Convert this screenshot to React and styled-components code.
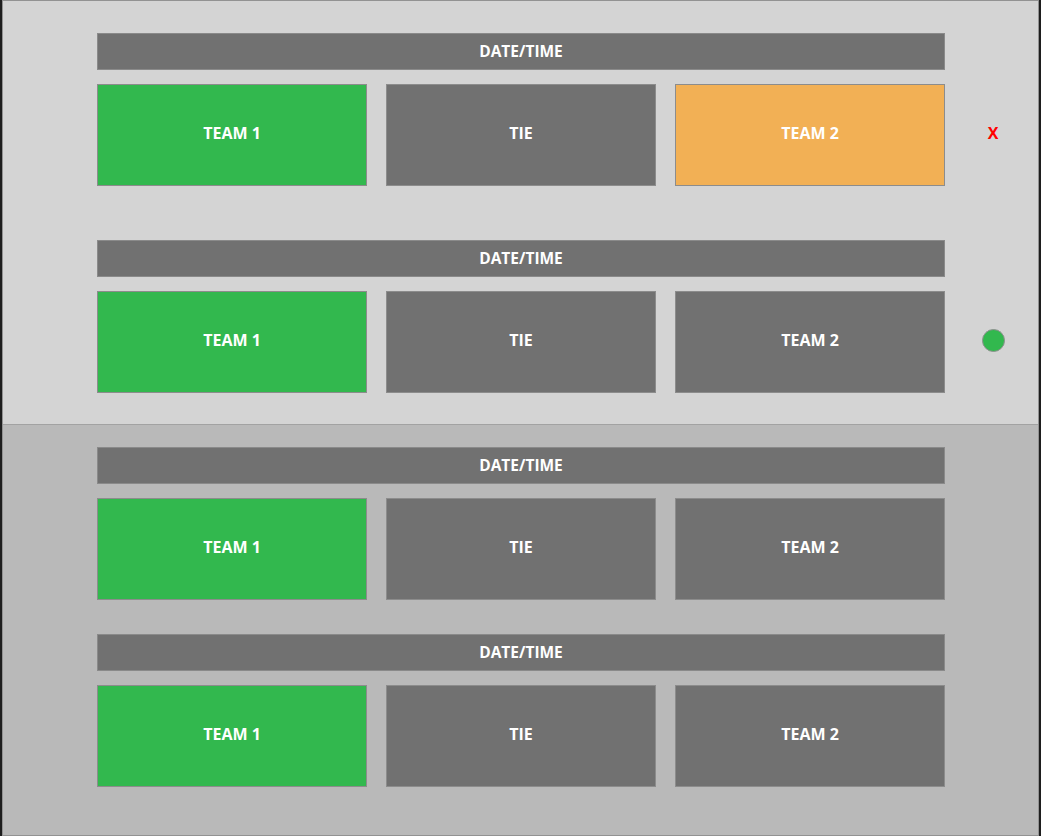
import styled, { createGlobalStyle } from "styled-components";

const GlobalStyle = createGlobalStyle`
  html, body {
    margin: 0;
    padding: 0;
    background: #1e1e1e;
  }
  body {
    font-family: "Open Sans", "Liberation Sans", sans-serif;
  }
`;

const Frame = styled.div`
  width: 1041px;
  height: 836px;
  box-sizing: border-box;
  border-left: 2px solid #1e1e1e;
  border-right: 2px solid #1e1e1e;
  overflow: hidden;
`;

const Board = styled.div`
  height: 100%;
  box-sizing: border-box;
  border: 1px solid #929292;
  display: flex;
  flex-direction: column;
`;

const Section = styled.section`
  background: ${({ $dark }) => ($dark ? "#b9b9b9" : "#d4d4d4")};
  padding: ${({ $dark }) => ($dark ? "22px 0 48px 94px" : "32px 0 31px 94px")};
  border-bottom: ${({ $dark }) => ($dark ? "none" : "1px solid #a2a2a2")};
  display: flex;
  flex-direction: column;
  gap: ${({ $dark }) => ($dark ? "34px" : "54px")};
  flex: ${({ $dark }) => ($dark ? "1" : "none")};
`;

const MatchRow = styled.div`
  display: flex;
  align-items: stretch;
`;

const Match = styled.div`
  width: 848px;
  display: flex;
  flex-direction: column;
  gap: 14px;
`;

const DateBar = styled.div`
  height: 37px;
  box-sizing: border-box;
  background: #717171;
  border: 1px solid #8a8a8a;
  color: #fff;
  font-weight: 700;
  font-size: 15.5px;
  padding-bottom: 1px;
  display: flex;
  align-items: center;
  justify-content: center;
`;

const Choices = styled.div`
  display: grid;
  grid-template-columns: repeat(3, 270px);
  gap: 19px;
`;

const colours = {
  green: "#32b84e",
  orange: "#f2b055",
  gray: "#717171",
};

const Choice = styled.button`
  height: 102px;
  box-sizing: border-box;
  background: ${({ $tone }) => colours[$tone]};
  border: 1px solid #8c8c8c;
  color: #fff;
  font-family: inherit;
  font-weight: 700;
  font-size: 16px;
  padding: 0 0 4px;
  cursor: pointer;
`;

const Indicator = styled.div`
  width: 93px;
  padding-left: 3px;
  display: flex;
  align-items: center;
  justify-content: center;
  margin-top: 49px;
  height: 102px;
`;

const Cross = styled.span`
  color: #f00;
  font-weight: 700;
  font-size: 16px;
`;

const Dot = styled.span`
  width: 21px;
  height: 21px;
  border-radius: 50%;
  background: #32b84e;
  border: 1px solid #8f8f8f;
`;

const matches = [
  { pick: "team2", status: "wrong" },
  { pick: "team1", status: "right" },
  { pick: "team1" },
  { pick: "team1" },
];

function MatchBlock({ match }) {
  return (
    <MatchRow>
      <Match>
        <DateBar>DATE/TIME</DateBar>
        <Choices>
          <Choice $tone="green">TEAM 1</Choice>
          <Choice $tone="gray">TIE</Choice>
          <Choice $tone={match.pick === "team2" ? "orange" : "gray"}>TEAM 2</Choice>
        </Choices>
      </Match>
      {match.status && (
        <Indicator>
          {match.status === "wrong" ? <Cross>X</Cross> : <Dot />}
        </Indicator>
      )}
    </MatchRow>
  );
}

export default function App() {
  return (
    <>
      <GlobalStyle />
      <Frame>
        <Board>
          <Section>
            <MatchBlock match={matches[0]} />
            <MatchBlock match={matches[1]} />
          </Section>
          <Section $dark>
            <MatchBlock match={matches[2]} />
            <MatchBlock match={matches[3]} />
          </Section>
        </Board>
      </Frame>
    </>
  );
}
